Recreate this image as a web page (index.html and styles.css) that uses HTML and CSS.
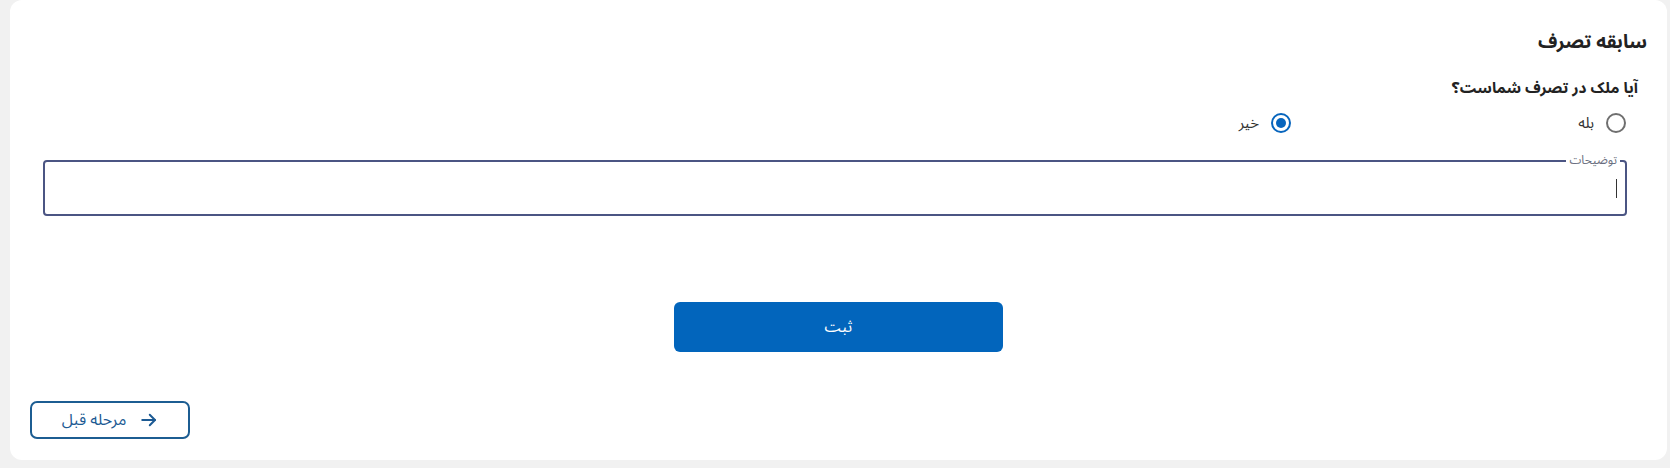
FILE: index.html
```html
<!DOCTYPE html>
<html lang="fa" dir="rtl">

<head>
    <meta charset="UTF-8">
    <meta name="viewport" content="width=device-width, initial-scale=1.0">
    <title>سابقه تصرف</title>
    <link rel="stylesheet" href="styles.css">
</head>

<body>
    <div class="page">
        <div class="card">
            <h2 class="title">سابقه تصرف</h2>
            <form class="possession-form">
                <p class="question">آیا ملک در تصرف شماست؟</p>
                <div class="radio-row">
                    <label class="radio-item">
                        <input type="radio" name="possession" value="yes">
                        <span>بله</span>
                    </label>
                    <label class="radio-item">
                        <input type="radio" name="possession" value="no" checked>
                        <span>خیر</span>
                    </label>
                </div>

                <fieldset class="notes">
                    <legend>توضیحات</legend>
                    <div class="notes-input"><span class="caret"></span></div>
                </fieldset>

                <div class="submit-row">
                    <button type="button" class="submit-btn">ثبت</button>
                </div>
            </form>

            <div class="footer-row">
                <button type="button" class="back-btn">
                    <svg width="18" height="18" viewBox="0 0 24 24" fill="none" stroke="currentColor" stroke-width="2.6" stroke-linecap="round" stroke-linejoin="round">
                        <path d="M3 12h17" />
                        <path d="M13 5l7 7-7 7" />
                    </svg>
                    <span>مرحله قبل</span>
                </button>
            </div>
        </div>
    </div>
</body>

</html>
```

FILE: styles.css
```css
* {
    box-sizing: border-box;
}

body {
    margin: 0;
    background-color: #f1f1f1;
    font-family: "Noto Sans Arabic", "DejaVu Sans", sans-serif;
    color: #222;
}

.page {
    padding: 0 3px 8px 10px;
}

.card {
    background-color: #fff;
    border-radius: 12px;
    height: 460px;
    padding: 20px;
    display: flex;
    flex-direction: column;
}

.title {
    margin: 8px 0 0;
    font-size: 19px;
    line-height: 28px;
    font-weight: bold;
    color: #222;
}

.possession-form {
    padding: 0 20px 0 13px;
}

.question {
    margin: 20px -11px 0 0;
    font-size: 15.4px;
    line-height: 24px;
    font-weight: bold;
    color: #222;
}

.radio-row {
    display: flex;
    margin-top: 11px;
    padding-right: 1px;
    height: 24px;
}

.radio-item {
    display: flex;
    align-items: center;
    gap: 12px;
    width: 335px;
    font-size: 15px;
    color: #333;
}

.radio-item input {
    appearance: none;
    margin: 0;
    width: 20px;
    height: 20px;
    border: 2px solid #6f6f6f;
    border-radius: 50%;
    display: grid;
    place-content: center;
}

.radio-item input:checked {
    border-color: #0765bd;
}

.radio-item input:checked::before {
    content: "";
    width: 10px;
    height: 10px;
    border-radius: 50%;
    background-color: #0765bd;
}

.notes {
    margin: 18px 0 0;
    min-width: 0;
    padding: 0 5px 6px;
    border: 2px solid #4b5583;
    border-radius: 4px;
}

.notes legend {
    padding: 0 3px;
    font-size: 12px;
    line-height: 16px;
    color: #6a6f80;
}

.notes-input {
    height: 39px;
    display: flex;
    align-items: center;
    padding-right: 3px;
}

.caret {
    width: 1px;
    height: 19px;
    background-color: #333;
}

/* the button row spans the whole card so the button sits in its middle */
.submit-row {
    display: flex;
    justify-content: center;
    margin: 86px -20px 0 -13px;
}

.submit-btn {
    width: 329px;
    height: 50px;
    border: none;
    border-radius: 6px;
    background-color: #0265bc;
    color: #fff;
    font-family: inherit;
    font-size: 16px;
}

.footer-row {
    display: flex;
    justify-content: flex-end;
    margin-top: 49px;
}

.back-btn {
    width: 160px;
    height: 38px;
    display: flex;
    align-items: center;
    justify-content: center;
    gap: 14px;
    border: 2px solid #1c5d92;
    border-radius: 7px;
    background-color: #fff;
    color: #1c5a93;
    font-family: inherit;
    font-size: 16px;
}
```
